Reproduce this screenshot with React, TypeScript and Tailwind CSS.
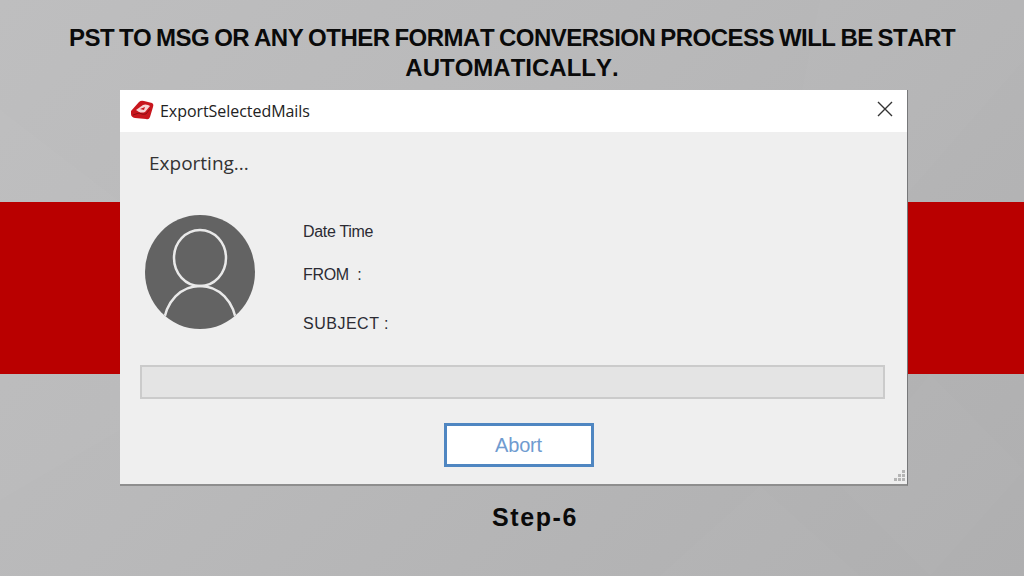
export default function App() {
  return (
    <div className="relative w-[1024px] h-[576px] overflow-hidden bg-[linear-gradient(135deg,#bebebf_0%,#b9b9ba_40%,#afafb0_100%)] font-['Liberation_Sans',sans-serif]">
      {/* faint facets of the slide background */}
      <svg width="1024" height="576" viewBox="0 0 1024 576" className="absolute left-0 top-0">
        <g fill="#ffffff" fillOpacity="0.025">
          <path d="M0 110 L120 202 L0 202 Z" />
          <path d="M820 0 L1024 0 L1024 60 L900 202 L780 202 Z" />
          <path d="M930 374 L1024 470 L930 576 L840 486 Z" />
          <path d="M760 486 L860 576 L660 576 Z" />
        </g>
        <path d="M0 374 L120 374 L120 430 L0 500 Z" fill="#ffffff" fillOpacity="0.02" />
      </svg>
      {/* red band sits behind the dialog */}
      <div className="absolute left-0 right-0 top-[202px] h-[172px] bg-[#b90000]" />

      <div className="relative flex flex-col items-center">
        <h1 className="w-[960px] pt-[23px] h-[90px] text-center text-[24px] leading-[30px] font-bold text-[#0a0a0a] [font-kerning:none]">
          <span className="block tracking-[-0.5px] [word-spacing:-1.3px]">PST TO MSG OR ANY OTHER FORMAT CONVERSION PROCESS WILL BE START</span>
          <span className="block">AUTOMATICALLY.</span>
        </h1>

        <div className="self-start ml-[120px] w-[788px] h-[396px] flex flex-col bg-[#efefef] border-r border-b-2 border-r-[#77787a] border-b-[#8e8e8e]">
          <div className="h-[42px] flex items-center justify-between bg-white pl-[10px] pr-[13px]">
            <div className="flex items-center gap-[6px]">
              <svg width="24" height="22" viewBox="0 0 24 22">
                <path d="M1 11 L9 2 Q11 0 14 1 L22 3 Q24 4 23 7 L20 17 Q19 20 16 19 L5 18 Q1 17 1 14 Z" fill="#c8161d" />
                <path d="M6 10 L13 5 Q15 4 18 5 L20 6 L15 12 Q12 13 9 12 Z" fill="#f6d5d5" />
                <path d="M10 9 L15 7 L14 10 Z" fill="#c8161d" />
                <path d="M3 15 L9 13 Q13 15 16 14 L20 9" stroke="#8f0d12" strokeWidth="1" fill="none" />
              </svg>
              <span className="font-['Open_Sans',sans-serif] text-[16px] tracking-[-0.05px] text-[#222]">ExportSelectedMails</span>
            </div>
            <svg width="18" height="18" viewBox="0 0 18 18" className="text-[#333] -mt-[4px]">
              <path d="M2 2 L16 16 M16 2 L2 16" stroke="currentColor" strokeWidth="1.4" fill="none" />
            </svg>
          </div>

          <div className="flex-1 flex flex-col px-[20px]">
            <div className="pl-[9px] pt-[18px] h-[82px] font-['Open_Sans',sans-serif] text-[19px] leading-[26px] text-[#333]">Exporting...</div>

            <div className="flex h-[151px]">
              <svg width="112" height="116" viewBox="0 0 112 116" className="ml-[4px] shrink-0">
                <defs>
                  <clipPath id="avatar">
                    <ellipse cx="56" cy="58" rx="55" ry="57" />
                  </clipPath>
                </defs>
                <ellipse cx="56" cy="58" rx="55" ry="57" fill="#636363" />
                <g clipPath="url(#avatar)" fill="none" stroke="#e9e9e9" strokeWidth="2.5">
                  <ellipse cx="56" cy="44" rx="26" ry="28" />
                  <path d="M19 113 C21 86 38 72 56 72 C74 72 91 86 93 113" />
                </g>
              </svg>
              <div className="ml-[47px] flex flex-col text-[16px] tracking-[-0.3px] text-[#2b2b33]">
                <span className="mt-[7px] leading-[22px]">Date Time</span>
                <span className="mt-[21px] leading-[22px] whitespace-pre">FROM  :</span>
                <span className="mt-[27px] leading-[22px] tracking-[0.5px]">SUBJECT :</span>
              </div>
            </div>

            <div className="w-[745px] h-[34px] bg-[#e4e4e4] border-2 border-[#cbcbcb]" />

            <div className="flex justify-center pt-[24px] pl-[10px]">
              <button className="w-[150px] h-[44px] bg-white border-[3px] border-[#4f86c1] text-[20px] tracking-[-0.2px] text-[#6f9bd0]">Abort</button>
            </div>
          </div>

          <div className="relative h-0">
            <svg width="14" height="14" viewBox="0 0 14 14" className="absolute right-[1px] bottom-[1px] text-[#b5b5b5]">
              <g fill="currentColor">
                <rect x="10" y="1" width="3" height="3" />
                <rect x="6" y="5" width="3" height="3" />
                <rect x="10" y="5" width="3" height="3" />
                <rect x="2" y="9" width="3" height="3" />
                <rect x="6" y="9" width="3" height="3" />
                <rect x="10" y="9" width="3" height="3" />
              </g>
            </svg>
          </div>
        </div>

        <div className="pt-[16px] pl-[46px] text-[25px] leading-[30px] font-bold tracking-[1.6px] text-[#0a0a0a]">Step-6</div>
      </div>
    </div>
  );
}
